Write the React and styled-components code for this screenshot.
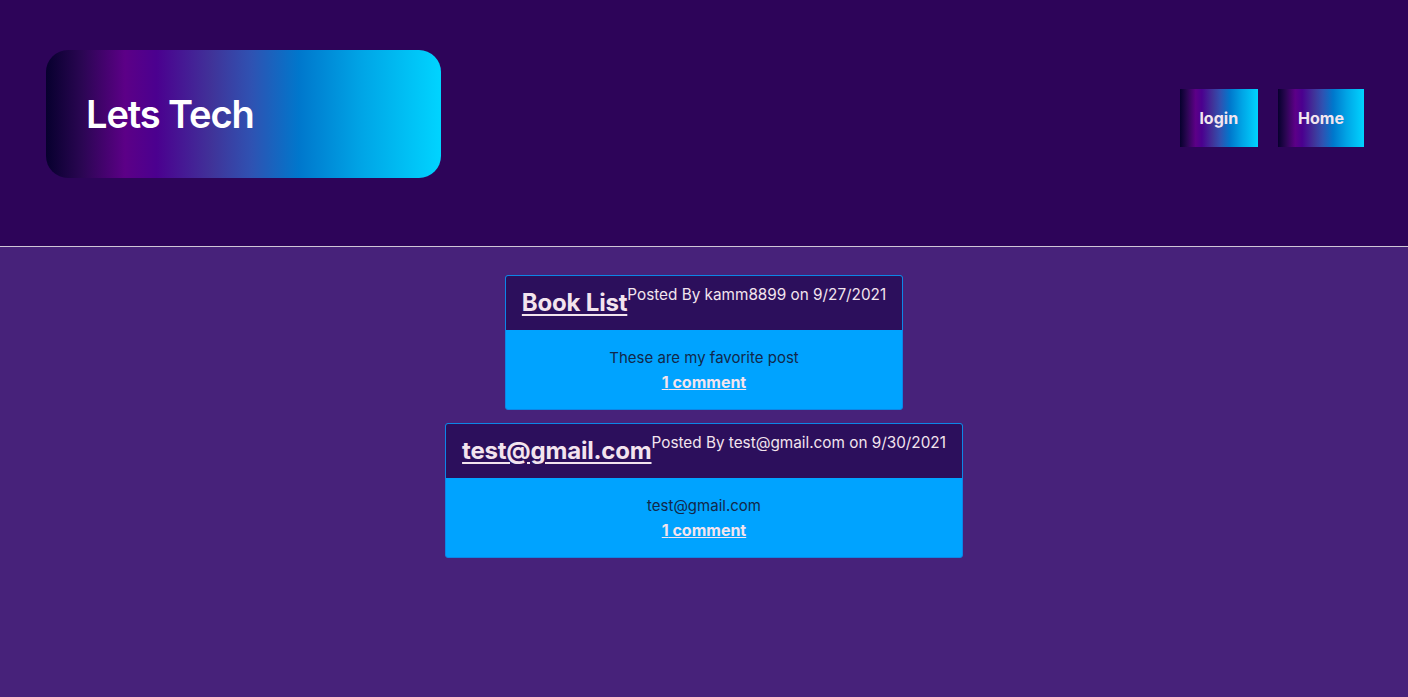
import React from "react";
import styled, { createGlobalStyle } from "styled-components";

const GlobalStyle = createGlobalStyle`
  html, body {
    margin: 0;
    padding: 0;
    background: #47227a;
    font-family: Inter, "Noto Sans", "Liberation Sans", sans-serif;
  }
`;

const techGradient = `linear-gradient(90deg, #07002e 0%, #2a0652 9%, #5c0087 20%, #4b008f 28%, #403399 42%, #2f52b2 52%, #0077cc 64%, #00a5e6 80%, #00d4ff 100%)`;

const Header = styled.header`
  display: flex;
  justify-content: space-between;
  align-items: flex-start;
  height: 247px;
  box-sizing: border-box;
  padding: 50px 44px 0 46px;
  background: #2d0459;
  border-bottom: 1px solid #cfc7d6;
`;

const Logo = styled.div`
  width: 395px;
  height: 128px;
  box-sizing: border-box;
  padding-left: 40px;
  display: flex;
  align-items: center;
  border-radius: 22px;
  background: ${techGradient};
`;

const LogoText = styled.h1`
  margin: 0;
  color: #ffffff;
  font-size: 38px;
  font-weight: 600;
  letter-spacing: -1.1px;
`;

const Nav = styled.nav`
  display: flex;
  gap: 20px;
  margin-top: 39px;
`;

const NavButton = styled.a`
  display: block;
  height: 58px;
  line-height: 58px;
  padding: 0 20px;
  color: #f3e6ef;
  font-size: 16px;
  font-weight: 700;
  text-decoration: none;
  background: ${techGradient};
`;

const Main = styled.main`
  display: flex;
  flex-direction: column;
  align-items: center;
  gap: 13px;
  padding-top: 28px;
  min-height: 450px;
`;

const Card = styled.article`
  border: 1px solid #0d86e6;
  border-radius: 3px;
  overflow: hidden;
  background: #00a3ff;
`;

const CardHead = styled.div`
  display: flex;
  align-items: flex-start;
  padding: 9px 16px 9px;
  background: #2c0f5c;
`;

const Title = styled.a`
  color: #f3e4ee;
  font-size: 24px;
  font-weight: 700;
  line-height: 36px;
  letter-spacing: -0.2px;
  text-decoration: underline;
  text-underline-offset: 3px;
`;

const Meta = styled.span`
  color: #f3e4ee;
  font-size: 15.3px;
  line-height: 20px;
`;

const CardBody = styled.div`
  padding: 16px 16px 15px;
  text-align: center;
  line-height: 24px;
`;

const Content = styled.p`
  margin: 0;
  color: #12284a;
  font-size: 15px;
`;

const Comments = styled.a`
  display: inline-block;
  color: #f3e4ee;
  font-size: 16px;
  font-weight: 700;
  text-decoration: underline;
`;

const posts = [
  { title: "Book List", author: "kamm8899", date: "9/27/2021", body: "These are my favorite post", comments: 1 },
  { title: "test@gmail.com", author: "test@gmail.com", date: "9/30/2021", body: "test@gmail.com", comments: 1 },
];

const App = () => {
  return (
    <>
      <GlobalStyle />
      <Header>
        <Logo>
          <LogoText>Lets Tech</LogoText>
        </Logo>
        <Nav>
          <NavButton href="#">login</NavButton>
          <NavButton href="#">Home</NavButton>
        </Nav>
      </Header>
      <Main>
        {posts.map((p) => (
          <Card key={p.title}>
            <CardHead>
              <Title href="#">{p.title}</Title>
              <Meta>Posted By {p.author} on {p.date}</Meta>
            </CardHead>
            <CardBody>
              <Content>{p.body}</Content>
              <Comments href="#">{p.comments} comment</Comments>
            </CardBody>
          </Card>
        ))}
      </Main>
    </>
  );
};

export default App;
